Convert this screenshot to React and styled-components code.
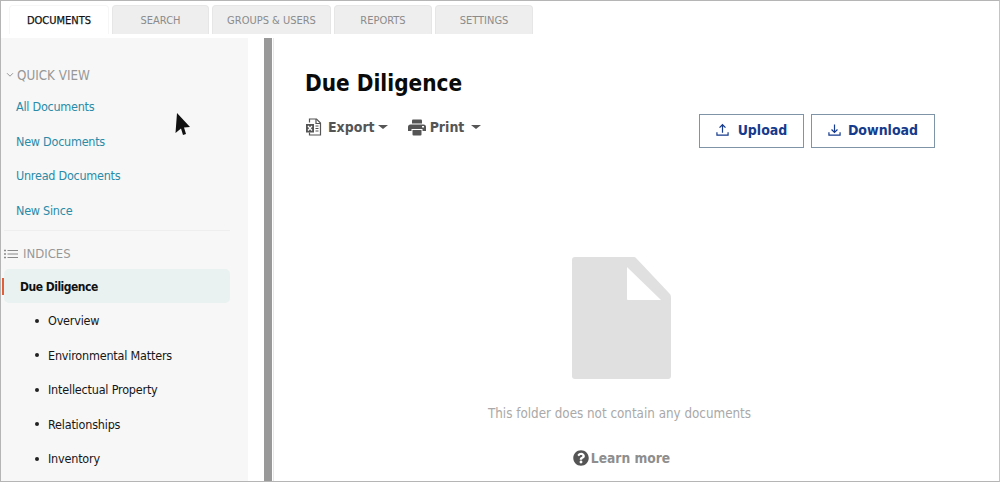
import React from 'react';
import styled, { createGlobalStyle } from 'styled-components';
import { FaQuestionCircle } from 'react-icons/fa';

const GlobalStyle = createGlobalStyle`
  html, body {
    margin: 0;
    padding: 0;
    background: #fff;
  }
  body {
    font-family: 'DejaVu Sans', 'Liberation Sans', sans-serif;
    font-stretch: condensed;
  }
  * {
    box-sizing: border-box;
  }
`;

const Frame = styled.div`
  position: relative;
  width: 1000px;
  height: 482px;
  border: 1px solid #b5b5b5;
  border-right-color: #c4c4c4;
  overflow: hidden;
  display: flex;
  flex-direction: column;
`;

const TabBar = styled.div`
  display: flex;
  gap: 3px;
  height: 37px;
  padding: 4px 0 0 8px;
`;

const Tab = styled.div`
  width: ${props => props.width}px;
  height: 29px;
  display: flex;
  align-items: center;
  justify-content: center;
  font-size: 11px;
  border-radius: 4px 4px 0 0;
  color: ${props => (props.active ? '#111' : '#8b8b8b')};
  background: ${props => (props.active ? '#fff' : '#eeeeee')};
  border: 1px solid ${props => (props.active ? '#f6f6f6' : '#e6e6e6')};
  border-bottom: none;
  -webkit-text-stroke: ${props => (props.active ? '0.25px #111' : '0')};
`;

const Body = styled.div`
  flex: 1;
  display: flex;
  min-height: 0;
`;

const Sidebar = styled.aside`
  width: 247px;
  background: #f7f7f7;
  padding-top: 27px;
  overflow: hidden;
`;

const SectionHead = styled.div`
  display: flex;
  align-items: center;
  gap: ${props => props.gap}px;
  height: 20px;
  padding-left: ${props => props.left}px;
  font-size: ${props => props.size}px;
  color: #979797;
`;

const LinkList = styled.div`
  display: flex;
  flex-direction: column;
  padding: 4.4px 0 0 15px;
`;

const SideLink = styled.div`
  height: 34.5px;
  display: flex;
  align-items: center;
  font-size: 12.5px;
  letter-spacing: -0.25px;
  color: #2a8ba8;
`;

const Rule = styled.div`
  width: 226px;
  height: 1px;
  margin: 2.6px 0 13px 3px;
  background: #eeeeee;
`;

const ActiveIndex = styled.div`
  position: relative;
  width: 226px;
  height: 34px;
  margin: 5px 0 0 3px;
  padding: 2px 0 0 16px;
  display: flex;
  align-items: center;
  background: #e9f1f1;
  border-radius: 5px;
  font-size: 12px;
  letter-spacing: -0.5px;
  font-weight: 700;
  color: #111;

  &::before {
    content: '';
    position: absolute;
    left: -2px;
    top: 9px;
    width: 2px;
    height: 17px;
    background: #e0603c;
  }
`;

const IndexList = styled.ul`
  list-style: none;
  margin: 0;
  padding: 0.4px 0 0 34px;
`;

const IndexItem = styled.li`
  height: 34.5px;
  display: flex;
  align-items: center;
  gap: 9px;
  font-size: 12.5px;
  letter-spacing: -0.2px;
  color: #161616;

  &::before {
    content: '';
    width: 4px;
    height: 4px;
    border-radius: 50%;
    background: #222;
  }
`;

const Gutter = styled.div`
  width: 16px;
  background: #fff;
`;

const Divider = styled.div`
  width: 8px;
  background: #999999;
`;

const Main = styled.main`
  flex: 1;
  display: flex;
  flex-direction: column;
  margin-left: 1px;
  border-left: 1px solid #e8e8e8;
  padding: 31px 64px 0 31px;
`;

const Title = styled.h1`
  margin: 0;
  height: 30px;
  font-size: 22.4px;
  line-height: 28px;
  font-weight: 700;
  color: #0a0a0a;
`;

const ActionRow = styled.div`
  display: flex;
  justify-content: space-between;
  align-items: flex-start;
  margin-top: 14px;
`;

const Tools = styled.div`
  display: flex;
  align-items: center;
  gap: 20px;
  height: 20px;
  margin-top: 4px;
`;

const Tool = styled.div`
  display: flex;
  align-items: center;
  gap: ${props => props.gap}px;
  font-size: 14px;
  font-weight: 700;
  color: #555;
`;

const Caret = styled.span`
  width: 0;
  height: 0;
  margin-left: ${props => props.left}px;
  border-left: 5px solid transparent;
  border-right: 5px solid transparent;
  border-top: 4px solid #555;
`;

const Buttons = styled.div`
  display: flex;
  gap: 7px;
  margin-top: 1px;
`;

const OutlineButton = styled.button`
  width: ${props => props.width}px;
  height: 34px;
  display: flex;
  align-items: center;
  justify-content: center;
  gap: ${props => props.gap}px;
  padding: 0 0 2px;
  font-family: inherit;
  font-stretch: condensed;
  font-size: 14px;
  font-weight: 700;
  color: #163a8c;
  background: #fff;
  border: 1px solid #8094a8;
`;

const Empty = styled.div`
  display: flex;
  flex-direction: column;
  align-items: center;
  margin-top: 109px;
  padding-left: 3px;
`;

const EmptyText = styled.div`
  margin: 27px 4px 0 0;
  font-size: 13.3px;
  color: #a9a9a9;
`;

const LearnMore = styled.div`
  display: flex;
  align-items: center;
  gap: 2px;
  margin-top: 29px;
  font-size: 13.7px;
  font-weight: 700;
  color: #8e8e8e;
`;

const Pointer = styled.svg`
  position: absolute;
  left: 173px;
  top: 111px;
`;

const ExcelIcon = () => (
  <svg width="17" height="18" viewBox="0 0 17 18">
    <path d="M4.5 4.5V1h7l4 4v12H4.5v-2.5" fill="none" stroke="#555" strokeWidth="1.2" />
    <path d="M11 1v4.5h4.5" fill="none" stroke="#555" strokeWidth="1.2" />
    <rect x="1" y="6" width="8" height="8.5" fill="#555" />
    <path d="M3 8l4 4.5M7 8l-4 4.5" stroke="#fff" strokeWidth="1.2" />
    <path d="M10.5 8h3M10.5 10.5h3M10.5 13h3" stroke="#555" strokeWidth="1" />
  </svg>
);

const PrintIcon = () => (
  <svg width="18" height="17" viewBox="0 0 18 17">
    <path d="M4 4.5V1.5a1 1 0 0 1 1-1h8a1 1 0 0 1 1 1v3z" fill="#555" />
    <path d="M2.5 5.5h13a2.5 2.5 0 0 1 2.5 2.5v4h-3.5v-2h-11v2H0V8a2.5 2.5 0 0 1 2.5-2.5z" fill="#555" />
    <path d="M4.5 11h9v4.5a1 1 0 0 1-1 1h-7a1 1 0 0 1-1-1z" fill="#555" />
    <rect x="14" y="7" width="2" height="1.5" fill="#fff" />
  </svg>
);

const ChevronDown = () => (
  <svg width="8" height="6" viewBox="0 0 8 6">
    <path d="M1 1.2l3 3 3-3" fill="none" stroke="#999" strokeWidth="1" />
  </svg>
);

const ListIcon = () => (
  <svg width="14" height="10" viewBox="0 0 14 10">
    <path d="M0 1.5h2M0 5h2M0 8.5h2" stroke="#8a8a8a" strokeWidth="1.4" />
    <path d="M3.5 1.5H14M3.5 5H14M3.5 8.5H14" stroke="#8a8a8a" strokeWidth="1.2" />
  </svg>
);

const UploadIcon = () => (
  <svg width="13" height="14" viewBox="0 0 14 14">
    <path d="M7 10V1.5M3.8 4.5L7 1.3l3.2 3.2" fill="none" stroke="#163a8c" strokeWidth="1.3" />
    <path d="M1 9.5v3h12v-3" fill="none" stroke="#163a8c" strokeWidth="1.3" />
  </svg>
);

const DownloadIcon = () => (
  <svg width="13" height="14" viewBox="0 0 14 14">
    <path d="M7 1v8.5M3.8 6.5L7 9.7l3.2-3.2" fill="none" stroke="#163a8c" strokeWidth="1.3" />
    <path d="M1 9.5v3h12v-3" fill="none" stroke="#163a8c" strokeWidth="1.3" />
  </svg>
);

const EmptyDocIcon = () => (
  <svg width="99" height="122" viewBox="0 0 99 122">
    <path
      fillRule="evenodd"
      fill="#e0e0e0"
      d="M3 0h59a3 3 0 0 1 2 1l33 35a5 5 0 0 1 2 4v79a3 3 0 0 1-3 3H3a3 3 0 0 1-3-3V3a3 3 0 0 1 3-3zM55 10v32a1 1 0 0 0 1 1h33z"
    />
  </svg>
);

const tabs = [
  { label: 'DOCUMENTS', width: 100, active: true },
  { label: 'SEARCH', width: 97 },
  { label: 'GROUPS & USERS', width: 119 },
  { label: 'REPORTS', width: 98 },
  { label: 'SETTINGS', width: 98 },
];

const quickView = ['All Documents', 'New Documents', 'Unread Documents', 'New Since'];
const indices = ['Overview', 'Environmental Matters', 'Intellectual Property', 'Relationships', 'Inventory'];

export default function App() {
  return (
    <>
      <GlobalStyle />
      <Frame>
        <TabBar>
          {tabs.map(tab => (
            <Tab key={tab.label} width={tab.width} active={tab.active}>
              {tab.label}
            </Tab>
          ))}
        </TabBar>
        <Body>
          <Sidebar>
            <SectionHead left={5} gap={3} size={13.3}>
              <ChevronDown />
              QUICK VIEW
            </SectionHead>
            <LinkList>
              {quickView.map(link => (
                <SideLink key={link}>{link}</SideLink>
              ))}
            </LinkList>
            <Rule />
            <SectionHead left={3} gap={5} size={13}>
              <ListIcon />
              INDICES
            </SectionHead>
            <ActiveIndex>Due Diligence</ActiveIndex>
            <IndexList>
              {indices.map(item => (
                <IndexItem key={item}>{item}</IndexItem>
              ))}
            </IndexList>
          </Sidebar>
          <Gutter />
          <Divider />
          <Main>
            <Title>Due Diligence</Title>
            <ActionRow>
              <Tools>
                <Tool gap={6}>
                  <ExcelIcon />
                  Export
                  <Caret left={-3} />
                </Tool>
                <Tool gap={4}>
                  <PrintIcon />
                  Print
                  <Caret left={3} />
                </Tool>
              </Tools>
              <Buttons>
                <OutlineButton width={105} gap={9}>
                  <UploadIcon />
                  Upload
                </OutlineButton>
                <OutlineButton width={124} gap={7}>
                  <DownloadIcon />
                  Download
                </OutlineButton>
              </Buttons>
            </ActionRow>
            <Empty>
              <EmptyDocIcon />
              <EmptyText>This folder does not contain any documents</EmptyText>
              <LearnMore>
                <FaQuestionCircle size={16} color="#555" />
                Learn more
              </LearnMore>
            </Empty>
          </Main>
        </Body>
        <Pointer width="17" height="24" viewBox="0 0 17 24">
          <path d="M3 1L16 15l-6 .6 2 6.4-3 1-2-6.5-5.5 4.5z" fill="#111" />
        </Pointer>
      </Frame>
    </>
  );
}
